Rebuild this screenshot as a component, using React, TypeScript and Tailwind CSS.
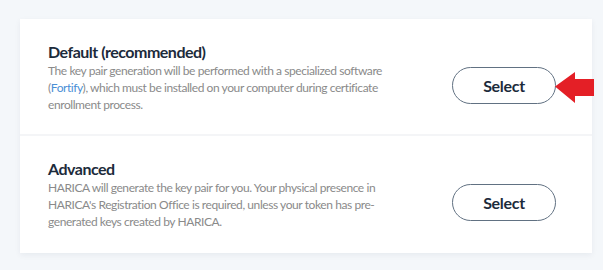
import React from "react";

function Section({
  title,
  children,
  pb,
}: {
  title: string;
  children: React.ReactNode;
  pb: string;
}) {
  return (
    <div className={`flex items-center justify-between bg-white pl-[28px] pr-[36px] pt-[23px] ${pb}`}>
      <div className="w-[365px]">
        <div className="text-[16px] leading-[20px] font-bold tracking-[-0.5px] text-[#1c2b3b]">{title}</div>
        <div className="text-[12px] leading-[17px] tracking-[-0.42px] text-[#8a8a8a]">{children}</div>
      </div>
      <button className="mt-4 w-[104px] h-[37px] rounded-full border-[1.5px] border-[#617182] bg-white text-[16px] font-bold tracking-[-0.3px] text-[#1c2b3b]">
        Select
      </button>
    </div>
  );
}

export default function App() {
  return (
    <div
      className="relative w-[603px] h-[270px] bg-[#f4f7fa] pt-[19px] pl-[20px]"
      style={{ fontFamily: "Lato, 'Noto Sans', sans-serif" }}
    >
      <div className="w-[572px] flex flex-col gap-[2px] bg-[#f4f5f7] shadow-[0_2px_6px_rgba(20,40,60,0.06)]">
        <Section title="Default (recommended)" pb="pb-[21px]">
          The key pair generation will be performed with a specialized software (
          <span className="text-[#4a8fd6]">Fortify</span>), which must be installed on your computer
          during certificate enrollment process.
        </Section>
        <Section title="Advanced" pb="pb-[23px]">
          HARICA will generate the key pair for you. Your physical presence in HARICA's Registration
          Office is required, unless your token has pre-generated keys created by HARICA.
        </Section>
      </div>
      <svg
        className="absolute left-[555px] top-[72px]"
        width="39"
        height="31"
        viewBox="0 0 39 31"
      >
        <path d="M0 14.5 L20 0 L20 7 L39 7 L39 24 L20 24 L20 31 Z" fill="#e41f26" />
      </svg>
    </div>
  );
}
